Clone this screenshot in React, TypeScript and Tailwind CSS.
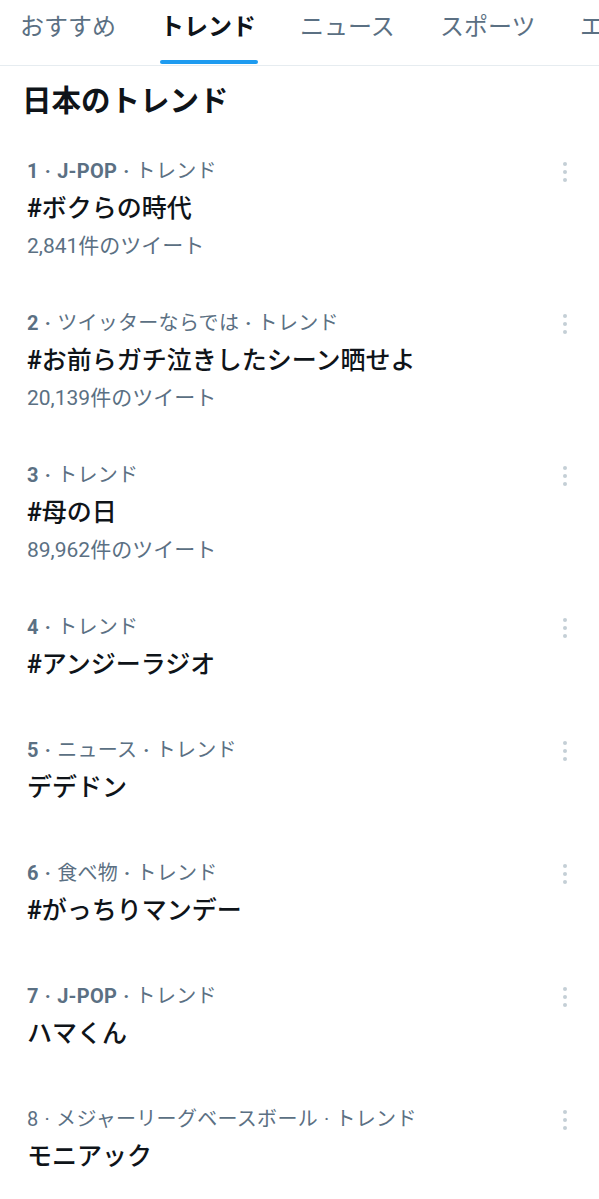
import React from 'react';

type Trend = {
  rank: string;
  category: string;
  title: string;
  count?: string;
  boldRank?: boolean;
};

const tabs = ['おすすめ', 'トレンド', 'ニュース', 'スポーツ', 'エンタメ'];

const trends: Trend[] = [
  { rank: '1', category: 'J-POP', title: '#ボクらの時代', count: '2,841件のツイート', boldRank: true },
  { rank: '2', category: 'ツイッターならでは', title: '#お前らガチ泣きしたシーン晒せよ', count: '20,139件のツイート', boldRank: true },
  { rank: '3', category: '', title: '#母の日', count: '89,962件のツイート', boldRank: true },
  { rank: '4', category: '', title: '#アンジーラジオ', boldRank: true },
  { rank: '5', category: 'ニュース', title: 'デデドン', boldRank: true },
  { rank: '6', category: '食べ物', title: '#がっちりマンデー', boldRank: true },
  { rank: '7', category: 'J-POP', title: 'ハマくん', boldRank: true },
  { rank: '8', category: 'メジャーリーグベースボール', title: 'モニアック' },
];

const font = { fontFamily: 'Roboto, "Noto Sans CJK JP", sans-serif' };

function Dots() {
  return (
    <div className="flex flex-col items-center gap-[4px] pt-[6px]">
      <span className="block w-[4px] h-[4px] rounded-full bg-[#c4cfd6]" />
      <span className="block w-[4px] h-[4px] rounded-full bg-[#c4cfd6]" />
      <span className="block w-[4px] h-[4px] rounded-full bg-[#c4cfd6]" />
    </div>
  );
}

function TrendRow({ t }: { t: Trend }) {
  const w = t.boldRank ? 'font-bold' : 'font-normal';
  const isLatin = /^[A-Za-z-]+$/.test(t.category);
  const sep = <span className={`${w} mx-[6px]`}>·</span>;
  // hash is bold latin, the rest falls to the CJK face
  const hasHash = t.title.startsWith('#');
  return (
    <div className="flex justify-between pl-[27px] pr-[32px] pt-[24px] pb-[23px]">
      <div>
        <div className="text-[20px] leading-[30px] text-[#5b7083] whitespace-nowrap tracking-[0.3px]">
          <span className={w}>{t.rank}</span>
          {sep}
          {t.category && (
            <>
              <span className={isLatin ? w : ''}>{t.category}</span>
              {sep}
            </>
          )}
          <span>トレンド</span>
        </div>
        <div className="text-[25px] leading-[46px] text-[#0f1419] font-medium whitespace-nowrap">
          {hasHash && <span className="font-bold">#</span>}
          {hasHash ? t.title.slice(1) : t.title}
        </div>
        {t.count && (
          <div className="text-[21px] leading-[29px] text-[#5b7083] whitespace-nowrap">{t.count}</div>
        )}
      </div>
      <Dots />
    </div>
  );
}

export default function App() {
  return (
    <div className="w-[599px] min-h-[1199px] bg-white overflow-hidden" style={font}>
      {/* TABS */}
      <nav className="flex h-[66px] pl-[20px] border-b border-[#e6ecf0] overflow-hidden">
        {tabs.map((tab, i) => (
          <div key={tab} className="flex flex-col shrink-0 w-[98px] mr-[42px] h-[65px]">
            <span
              className={`pt-[11px] text-[24px] leading-[32px] whitespace-nowrap ${
                i === 1 ? 'font-bold text-[#0f1419]' : 'text-[#5b7083]'
              }`}
            >
              {tab}
            </span>
            {i === 1 && <div className="mt-auto mb-px h-[4px] rounded-full bg-[#1d9bf0]" />}
          </div>
        ))}
      </nav>

      {/* HEADING */}
      <h1 className="pl-[22px] pt-[17px] pb-[13px] text-[29.5px] leading-[36px] font-bold text-[#0f1419]">
        日本のトレンド
      </h1>

      {/* TREND LIST */}
      <div>
        {trends.map((t) => (
          <TrendRow key={t.rank} t={t} />
        ))}
      </div>
    </div>
  );
}
